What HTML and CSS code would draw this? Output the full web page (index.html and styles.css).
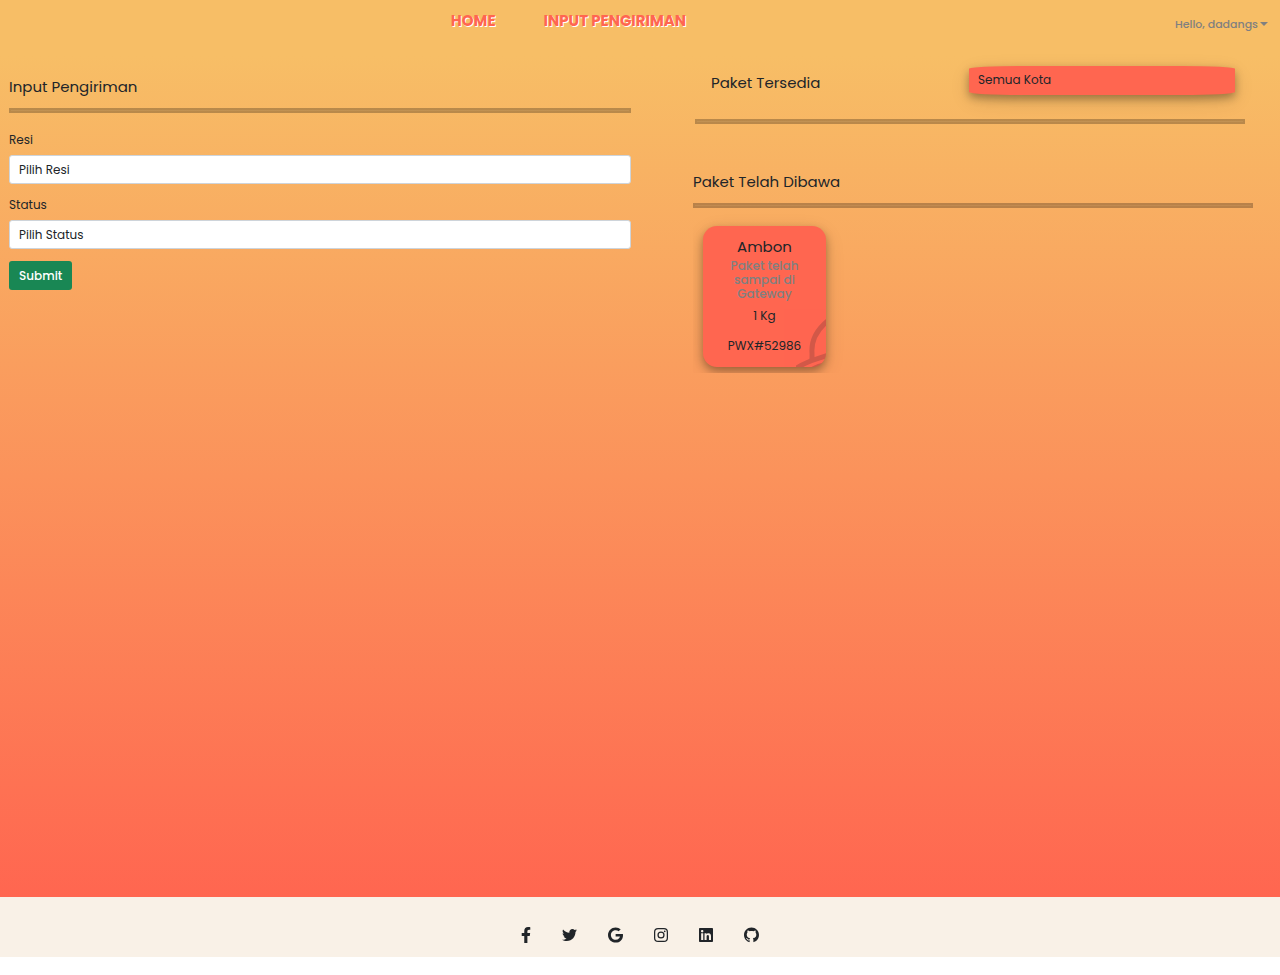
FILE: index.html
```html
<!DOCTYPE html>
<html lang="id">
<head>
<meta charset="utf-8">
<meta name="viewport" content="width=device-width, initial-scale=1">
<title>Input Pengiriman</title>
<link rel="stylesheet" href="styles.css">
</head>
<body>
<div class="page">
  <header class="navbar">
    <nav class="nav-links">
      <a class="nav-link" href="#">HOME</a>
      <a class="nav-link" href="#">INPUT PENGIRIMAN</a>
    </nav>
    <button class="user-menu" type="button">Hello, dadangs<span class="caret"></span></button>
  </header>
  <main class="content">
    <section class="entry">
      <h1 class="title">Input Pengiriman</h1>
      <hr class="rule">
      <form class="form">
        <label class="label" for="resi">Resi</label>
        <select class="select" id="resi"><option>Pilih Resi</option></select>
        <label class="label" for="status">Status</label>
        <select class="select" id="status"><option>Pilih Status</option></select>
        <button class="submit" type="submit">Submit</button>
      </form>
    </section>
    <div class="packages">
      <section class="available">
        <div class="available-head">
          <h2 class="title">Paket Tersedia</h2>
          <select class="select city" aria-label="Kota"><option>Semua Kota</option></select>
        </div>
        <hr class="rule">
      </section>
      <section class="carried">
        <h2 class="title">Paket Telah Dibawa</h2>
        <hr class="rule">
        <div class="cards">
          <article class="card">
            <svg class="card-mark" viewBox="0 0 30 50" aria-hidden="true">
              <g fill="none" stroke="#212529">
                <path stroke-width="5" d="M34 2C22 11 15 22 16 36L16 42"/>
                <path stroke-width="5" d="M-2 53C7 46 17 43 33 38"/>
                <path stroke-width="3" d="M15 52C21 48 26 47 33 46"/>
              </g>
            </svg>
            <h3 class="card-city">Ambon</h3>
            <p class="card-status">Paket telah sampai di Gateway</p>
            <p class="card-text">1 Kg</p>
            <p class="card-text">PWX#52986</p>
          </article>
        </div>
      </section>
    </div>
  </main>
  <footer class="footer">
    <a class="social" href="#" aria-label="Facebook"><svg viewBox="0 0 320 512" width="10" height="16"><path d="M279.14 288l14.22-92.66h-88.91v-60.13c0-25.35 12.42-50.06 52.24-50.06h40.42V6.26S260.43 0 225.36 0c-73.22 0-121.08 44.38-121.08 124.72v70.62H22.89V288h81.39v224h100.17V288z"/></svg></a>
    <a class="social" href="#" aria-label="Twitter"><svg viewBox="0 0 512 512" width="15" height="16"><path d="M459.37 151.716c.325 4.548.325 9.097.325 13.645 0 138.72-105.583 298.558-298.558 298.558-59.452 0-114.68-17.219-161.137-47.106 8.447.974 16.568 1.299 25.34 1.299 49.055 0 94.213-16.568 130.274-44.832-46.132-.975-84.792-31.188-98.112-72.772 6.498.974 12.995 1.624 19.818 1.624 9.421 0 18.843-1.3 27.614-3.573-48.081-9.747-84.143-51.98-84.143-102.985v-1.299c13.969 7.797 30.214 12.67 47.431 13.319-28.264-18.843-46.781-51.005-46.781-87.391 0-19.492 5.197-37.36 14.294-52.954 51.655 63.675 129.3 105.258 216.365 109.807-1.624-7.797-2.599-15.918-2.599-24.04 0-57.828 46.782-104.934 104.934-104.934 30.213 0 57.502 12.67 76.67 33.137 23.715-4.548 46.456-13.32 66.599-25.34-7.798 24.366-24.366 44.833-46.132 57.827 21.117-2.273 41.584-8.122 60.426-16.243-14.292 20.791-32.161 39.308-52.628 54.253z"/></svg></a>
    <a class="social" href="#" aria-label="Google"><svg viewBox="0 0 488 512" width="15" height="16"><path d="M488 261.8C488 403.3 391.1 504 248 504 110.8 504 0 393.2 0 256S110.8 8 248 8c66.8 0 123 24.5 166.3 64.9l-67.5 64.9C258.5 52.6 94.3 116.6 94.3 256c0 86.5 69.1 156.6 153.7 156.6 98.2 0 135-70.4 140.8-106.9H248v-85.3h236.1c2.3 12.7 3.9 24.9 3.9 41.4z"/></svg></a>
    <a class="social" href="#" aria-label="Instagram"><svg viewBox="0 0 448 512" width="14" height="16"><rect x="20" y="52" width="408" height="408" rx="110" fill="none" stroke="#212529" stroke-width="40"/><circle cx="224" cy="256" r="95" fill="none" stroke="#212529" stroke-width="40"/><circle cx="343" cy="137" r="27"/></svg></a>
    <a class="social" href="#" aria-label="LinkedIn"><svg viewBox="0 0 448 512" width="14" height="16"><path d="M416 32H31.9C14.3 32 0 46.5 0 64.3v383.4C0 465.5 14.3 480 31.9 480H416c17.6 0 32-14.5 32-32.3V64.3c0-17.8-14.4-32.3-32-32.3zM135.4 416H69V202.2h66.5V416zm-33.2-243c-21.3 0-38.5-17.3-38.5-38.5S80.9 96 102.2 96c21.2 0 38.5 17.3 38.5 38.5 0 21.3-17.2 38.5-38.5 38.5zm282.1 243h-66.4V312c0-24.8-.5-56.7-34.5-56.7-34.6 0-39.9 27-39.9 54.9V416h-66.4V202.2h63.7v29.2h.9c8.9-16.8 30.6-34.5 62.9-34.5 67.2 0 79.7 44.3 79.7 101.9V416z"/></svg></a>
    <a class="social" href="#" aria-label="GitHub"><svg viewBox="0 0 16 16" width="15" height="16"><path d="M8 0C3.58 0 0 3.58 0 8c0 3.54 2.29 6.53 5.47 7.59.4.07.55-.17.55-.38 0-.19-.01-.82-.01-1.49-2.01.37-2.53-.49-2.69-.94-.09-.23-.48-.94-.82-1.13-.28-.15-.68-.52-.01-.53.63-.01 1.08.58 1.23.82.72 1.21 1.87.87 2.33.66.07-.52.28-.87.51-1.07-1.78-.2-3.64-.89-3.64-3.95 0-.87.31-1.59.82-2.15-.08-.2-.36-1.02.08-2.12 0 0 .67-.21 2.2.82.64-.18 1.32-.27 2-.27s1.36.09 2 .27c1.53-1.04 2.2-.82 2.2-.82.44 1.1.16 1.92.08 2.12.51.56.82 1.27.82 2.15 0 3.07-1.87 3.75-3.65 3.95.29.25.54.73.54 1.48 0 1.07-.01 1.93-.01 2.2 0 .21.15.46.55.38A8.01 8.01 0 0 0 16 8c0-4.42-3.58-8-8-8z"/></svg></a>
  </footer>
</div>
</body>
</html>
```
FILE: styles.css
```css
* {
  box-sizing: border-box;
}

body {
  margin: 0;
  background: #fff;
  color: #212529;
  font-family: Poppins, Inter, "Noto Sans", sans-serif;
  font-size: 12px;
  line-height: 18px;
}

.page {
  display: flex;
  flex-direction: column;
  min-height: 100vh;
  padding-bottom: 18px;
}

.navbar {
  display: flex;
  background: #f7be66;
  height: 56px;
}

.nav-links {
  display: flex;
  flex: 1;
  justify-content: center;
  gap: 48px;
  padding-top: 11px;
}

.nav-link {
  color: #ff6650;
  font-size: 15px;
  font-weight: 700;
  line-height: 20px;
  text-decoration: none;
  text-shadow: 1px 1px #fff;
}

.user-menu {
  display: flex;
  align-items: center;
  align-self: flex-start;
  gap: 2px;
  height: 48px;
  padding: 0 12px 0 38px;
  border: 0;
  background: none;
  color: #808080;
  font: inherit;
  font-size: 11px;
  font-weight: 500;
}

.caret {
  border: 4px solid transparent;
  border-top-color: #808080;
  border-bottom: 0;
}

.content {
  display: grid;
  flex: 1;
  grid-template-columns: 1fr 1fr;
  align-items: start;
  background: linear-gradient(#f7be66, #ff6650);
}

.entry {
  padding: 21px 9px 0;
}

.title {
  margin: 0;
  font-size: 15px;
  font-weight: 400;
  line-height: 20px;
}

.rule {
  height: 5px;
  margin: 11px 0 0;
  border: 2px solid #000;
  background: #222;
  opacity: .25;
}

.form {
  display: flex;
  flex-direction: column;
  padding-top: 18px;
}

.label {
  margin-bottom: 6px;
}

.select {
  width: 100%;
  height: 29px;
  margin-bottom: 12px;
  padding: 0 9px;
  appearance: none;
  border: 1px solid #ced4da;
  border-radius: 3px;
  background: #fff;
  color: #212529;
  font: inherit;
}

.submit {
  align-self: flex-start;
  height: 29px;
  padding: 0 10px;
  border: 0;
  border-radius: 3px;
  background: #198754;
  color: #fff;
  font: inherit;
  font-weight: 500;
}

.packages {
  padding: 10px 27px 0 53px;
}

.available {
  padding: 0 8px 0 2px;
}

.available-head {
  display: grid;
  grid-template-columns: 1fr 1fr;
  padding: 0 10px 0 8px;
}

.available-head .title {
  padding: 7px 8px 0;
}

.city {
  margin: 0;
  padding-bottom: 2px;
  border: 0;
  border-radius: 20% / 10%;
  background: #ff6650;
  box-shadow: 0 4px 8px rgba(0, 0, 0, .3), 0 6px 20px rgba(0, 0, 0, .12);
}

.available .rule {
  margin-top: 24px;
}

.carried {
  padding-top: 48px;
}

.cards {
  display: flex;
  overflow: hidden;
  padding: 18px 10px 6px;
}

.card {
  position: relative;
  width: 123px;
  padding: 11px 20px 12px;
  overflow: hidden;
  border-radius: 14px;
  background: #ff6650;
  box-shadow: 0 4px 8px rgba(0, 0, 0, .3), 0 6px 20px rgba(0, 0, 0, .12);
  text-align: center;
}

.card-mark {
  position: absolute;
  right: 0;
  bottom: 0;
  width: 30px;
  opacity: .2;
}

.card-city {
  margin: 0 0 2px;
  font-size: 15px;
  font-weight: 400;
  line-height: 20px;
}

.card-status {
  margin: 0 0 6px;
  color: #808080;
  font-weight: 500;
  line-height: 14px;
}

.card-text {
  margin: 0 -12px;
}

.card-text + .card-text {
  margin-top: 12px;
}

.footer {
  display: flex;
  justify-content: center;
  gap: 31px;
  height: 60px;
  padding-top: 30px;
  background: #f9f1e7;
}

.social {
  height: 16px;
}

.social svg {
  display: block;
  fill: #212529;
}
```
